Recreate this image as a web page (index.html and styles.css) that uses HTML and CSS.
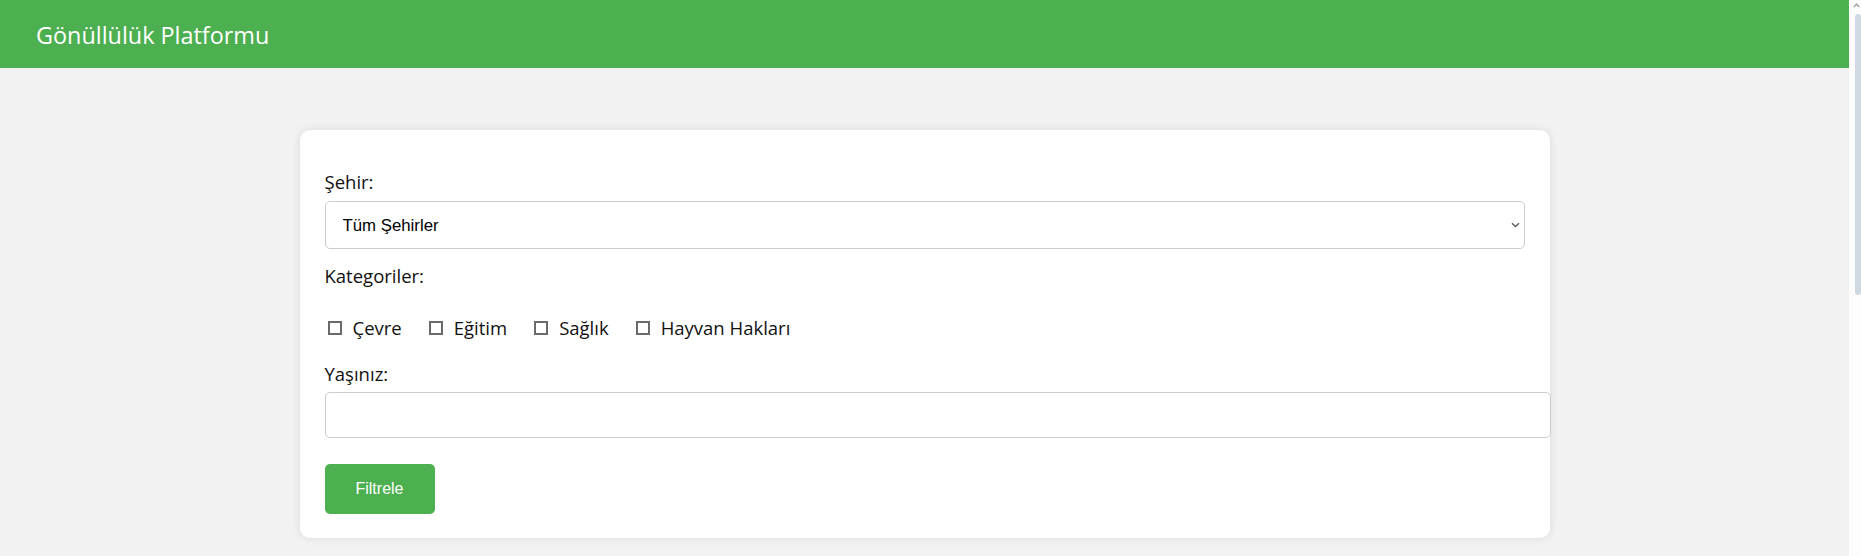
FILE: index.html
```html
<!DOCTYPE html>
<html lang="tr">
<head>
<meta charset="utf-8">
<title>Gönüllülük Platformu</title>
<link rel="stylesheet" href="styles.css">
</head>
<body>
<header class="topbar">
  <h1 class="brand">Gönüllülük Platformu</h1>
</header>
<main class="page">
  <section class="card">
    <form class="filter-form">
      <label class="field-label" for="city">Şehir:</label>
      <div class="select-wrap">
        <select id="city" class="select">
          <option>Tüm Şehirler</option>
        </select>
        <svg class="select-arrow" width="9" height="6" viewBox="0 0 9 6" aria-hidden="true"><path d="M1 1.2 L4.5 4.6 L8 1.2" fill="none" stroke="#5a5a5a" stroke-width="1.4"/></svg>
      </div>
      <div class="field-label cat-title">Kategoriler:</div>
      <div class="cats">
        <label class="cat"><span class="box"></span>Çevre</label>
        <label class="cat"><span class="box"></span>Eğitim</label>
        <label class="cat"><span class="box"></span>Sağlık</label>
        <label class="cat"><span class="box"></span>Hayvan Hakları</label>
      </div>
      <label class="field-label age-label" for="age">Yaşınız:</label>
      <input id="age" class="text-input" type="number">
      <button type="button" class="btn">Filtrele</button>
    </form>
  </section>
  <section class="results"></section>
</main>
<div class="scrollbar" aria-hidden="true">
  <svg class="scroll-up" width="7" height="5" viewBox="0 0 7 5"><path d="M0.8 4 L3.5 1.2 L6.2 4" fill="none" stroke="#a8a8a8" stroke-width="1.5"/></svg>
  <div class="scroll-thumb"></div>
</div>
</body>
</html>
```
FILE: styles.css
```css
html {
  background: #fdfdfd;
}
body {
  margin: 0 12px 0 0;
  background: #f2f2f2;
  font-family: "Open Sans", "Noto Sans", sans-serif;
  color: #111;
  min-height: 1045px;
}
.topbar {
  background: #4caf50;
  height: 68px;
  display: flex;
  align-items: center;
  padding-left: 36px;
}
.brand {
  margin: 0;
  color: #fff;
  font-weight: 400;
  font-size: 23.4px;
  line-height: 30px;
  padding-top: 1px;
}
.page {
  padding-top: 62px;
}
.card {
  width: 1200px;
  margin: 0 auto;
  background: #fff;
  border-radius: 10px;
  box-shadow: 0 0 10px rgba(0, 0, 0, 0.1);
  padding: 40px 25px 24px;
}
.filter-form {
  display: flex;
  flex-direction: column;
  align-items: flex-start;
}
.field-label {
  display: block;
  font-size: 18.5px;
  line-height: 24px;
  margin-bottom: 7px;
}
.select-wrap {
  position: relative;
  width: 1200px;
}
.select {
  display: block;
  width: 100%;
  height: 48px;
  box-sizing: border-box;
  appearance: none;
  -webkit-appearance: none;
  background: #fff;
  border: 1px solid #ccc;
  border-radius: 5px;
  padding: 0 12px 0 17px;
  font-family: "Liberation Sans", Arial, sans-serif;
  font-size: 16.8px;
  color: #000;
}
.select-arrow {
  position: absolute;
  right: 5px;
  top: 21px;
}
.cat-title {
  margin-top: 15px;
  margin-bottom: 0;
}
.cats {
  display: flex;
  margin-top: 28px;
  font-size: 18.5px;
  line-height: 24px;
}
.cat {
  display: flex;
  align-items: center;
  margin-right: 24px;
}
.box {
  width: 10px;
  height: 10px;
  border: 2px solid #6a6a6a;
  margin: 0 11px 0 3px;
}
.age-label {
  margin-top: 22px;
  margin-bottom: 6px;
}
.text-input {
  display: block;
  width: 1200px;
  height: 20px;
  padding: 12px;
  margin: 0;
  border: 1px solid #ccc;
  border-radius: 5px;
  font-size: 16px;
  background: #fff;
}
.btn {
  margin-top: 26px;
  width: 110px;
  height: 50px;
  background: #4caf50;
  color: #fff;
  border: none;
  border-radius: 5px;
  font-family: "Liberation Sans", Arial, sans-serif;
  font-size: 16px;
  cursor: pointer;
}
.results {
  height: 420px;
}
.scrollbar {
  position: fixed;
  top: 0;
  right: 0;
  width: 12px;
  height: 100vh;
  background: #fdfdfd;
}
.scroll-up {
  position: absolute;
  top: 3px;
  left: 4px;
}
.scroll-thumb {
  position: absolute;
  top: 14px;
  left: 6px;
  width: 6px;
  height: 281px;
  background: #cfd9e2;
  border-radius: 3px;
}
```
